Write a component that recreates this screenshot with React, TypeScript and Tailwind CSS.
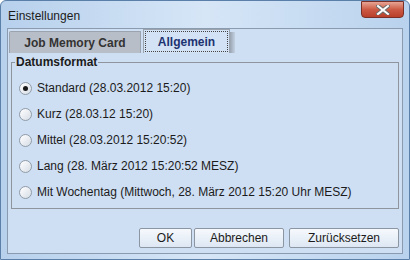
const font = { fontFamily: '"Liberation Sans", Arial, sans-serif' };

function Radio({ checked, label }: { checked?: boolean; label: string }) {
  return (
    <div className="flex items-center h-[26px] pl-[7px]">
      <div className="w-[13px] h-[13px] rounded-full border border-[#8f9ba8] bg-gradient-to-br from-[#ffffff] to-[#d6dde6] flex items-center justify-center">
        {checked && <div className="w-[5px] h-[5px] rounded-full bg-[#1a1a1a]" />}
      </div>
      <span className="ml-[5px] text-[12px] text-[#1b1b1b]">{label}</span>
    </div>
  );
}

function Button({ label, w }: { label: string; w: string }) {
  return (
    <button
      className={`${w} h-[20px] border border-[#8c96a3] rounded-[2px] bg-gradient-to-b from-[#f6f9fd] to-[#dde7f3] text-[12px] text-[#1b1b1b]`}
    >
      {label}
    </button>
  );
}

export default function App() {
  return (
    <div
      style={font}
      className="w-[410px] h-[260px] relative bg-gradient-to-r from-[#b7d0ec] via-[#d6e6f7] to-[#b9d2ed] border border-[#5a7fa8] rounded-t-[6px] overflow-hidden"
    >
      {/* title bar */}
      <div className="h-[27px] flex items-center pl-[7px] pt-[2px] text-[12px] text-[#1b1b1b]">Einstellungen</div>
      <div className="absolute top-0 right-[5px] w-[43px] h-[17px] rounded-b-[4px] border border-[#7a3026] bg-gradient-to-b from-[#e6a495] via-[#cc5a44] to-[#b9402b] flex items-center justify-center">
        <svg width="14" height="10" viewBox="0 0 14 10">
          <path d="M2 1 L12 9 M12 1 L2 9" stroke="#6b6b6b" strokeWidth="4" strokeLinecap="square" />
          <path d="M2 1 L12 9 M12 1 L2 9" stroke="#ffffff" strokeWidth="2" strokeLinecap="square" />
        </svg>
      </div>

      {/* client area */}
      <div className="mx-[6px] h-[226px] border border-[#8a9bb0] bg-[#cfdff3] flex flex-col">
        {/* tabs */}
        <div className="flex items-end pl-[1px] h-[24px]">
          <div className="w-[132px] h-[22px] bg-[#b8bec7] border border-[#9aa3ae] border-b-0 rounded-tl-[2px] flex items-center justify-center font-bold text-[12px] text-[#333]">
            Job Memory Card
          </div>
          <div className="ml-[2px] w-[87px] h-[24px] bg-[#d3e2f5] border border-[#9aa3ae] border-b-0 p-[1px]">
            <div className="w-full h-full border border-dotted border-[#444] flex items-center justify-center font-bold text-[12px] text-[#1d3270]">
              Allgemein
            </div>
          </div>
          <div className="w-[5px] h-[21px] bg-gradient-to-r from-[#9aa4b0] to-[#c3d1e3]" />
        </div>

        {/* titled border */}
        <div className="relative mx-[3px] mt-[9px] h-[147px] border border-[#8e959d]">
          <span className="absolute -top-[8px] left-[3px] px-[1px] bg-[#cfdff3] font-bold text-[12px] leading-[14px] text-[#1b1b1b]">
            Datumsformat
          </span>
          <div className="pt-[12px] flex flex-col">
            <Radio checked label="Standard (28.03.2012 15:20)" />
            <Radio label="Kurz (28.03.12 15:20)" />
            <Radio label="Mittel (28.03.2012 15:20:52)" />
            <Radio label="Lang (28. März 2012 15:20:52 MESZ)" />
            <Radio label="Mit Wochentag (Mittwoch, 28. März 2012 15:20 Uhr MESZ)" />
          </div>
        </div>

        {/* buttons */}
        <div className="mt-auto mb-[5px] flex justify-end pr-[3px]">
          <Button label="OK" w="w-[53px]" />
          <div className="w-[2px]" />
          <Button label="Abbrechen" w="w-[90px]" />
          <div className="w-[5px]" />
          <Button label="Zurücksetzen" w="w-[110px]" />
        </div>
      </div>
    </div>
  );
}
